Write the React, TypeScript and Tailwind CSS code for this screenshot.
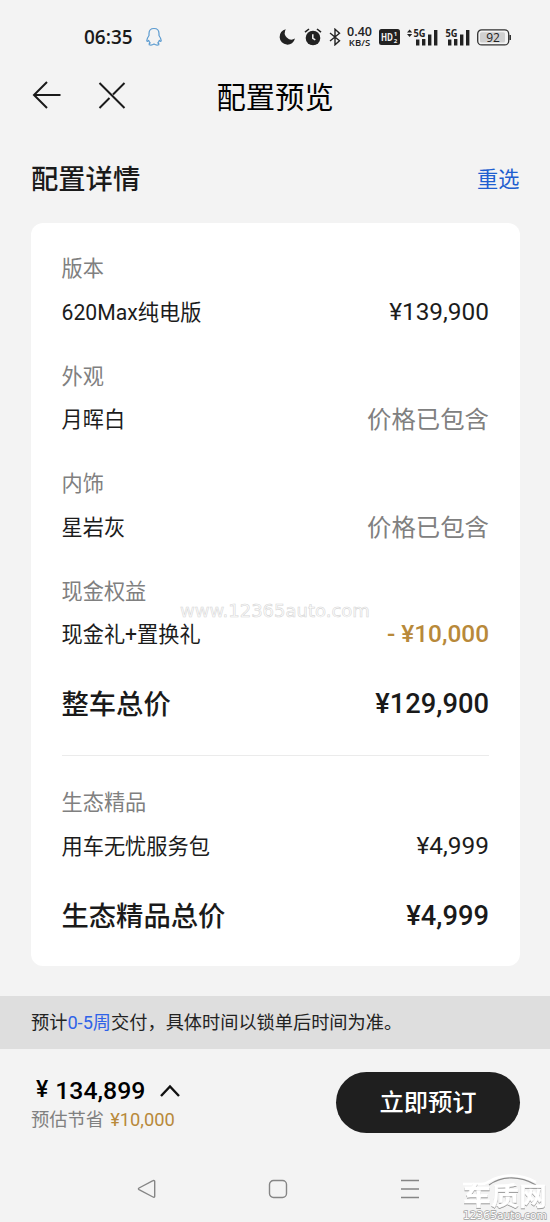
import React from 'react';

interface ConfigItem {
  label: string;
  name: string;
  price: string;
  tone: 'normal' | 'included' | 'discount';
}

const vehicleItems: ConfigItem[] = [
  { label: '版本', name: '620Max纯电版', price: '¥139,900', tone: 'normal' },
  { label: '外观', name: '月晖白', price: '价格已包含', tone: 'included' },
  { label: '内饰', name: '星岩灰', price: '价格已包含', tone: 'included' },
  { label: '现金权益', name: '现金礼+置换礼', price: '- ¥10,000', tone: 'discount' },
];

const ecoItems: ConfigItem[] = [
  { label: '生态精品', name: '用车无忧服务包', price: '¥4,999', tone: 'normal' },
];

const priceTone = {
  normal: 'text-[#1c1c1c]',
  included: 'pt-[2px] text-[#808080]',
  discount: 'font-medium text-[#b8893a]',
};

const SignalBars: React.FC<{ arrows?: boolean }> = ({ arrows }) => (
  <svg width="32" height="20" viewBox="0 0 32 20" fill="#222">
    {arrows && <path d="M0 5.4 2.6 2.4 5.2 5.4zM0 7h5.2L2.6 10z" />}
    <text x="6.5" y="10.3" fontSize="10.5" fontWeight="700" textLength="12" lengthAdjust="spacingAndGlyphs">
      5G
    </text>
    <rect x="9" y="12.5" width="3.4" height="6" />
    <rect x="15" y="12" width="3.4" height="6.5" />
    <rect x="21" y="7.5" width="3.4" height="11" />
    <rect x="27" y="3" width="3.4" height="15.5" />
  </svg>
);

const StatusBar: React.FC = () => (
  <div className="flex h-[74px] items-center pl-[84px] font-['Open_Sans','Noto_Sans',sans-serif]">
    <span className="w-[49px] text-[19px] leading-none font-semibold text-[#1a1a1a]">06:35</span>
    {/* QQ notification */}
    <svg className="ml-[12px]" width="18" height="20" viewBox="0 0 18 20" fill="none" stroke="#5b9bd0" strokeWidth="1.2" strokeLinejoin="round">
      <path d="M9 1.5C5.8 1.5 4 3.8 4 6.5v2C2.8 10.2 1.8 12 1.8 13.6c0 1.2.9 1 1.9-.2.3 1 .8 1.8 1.5 2.5-1 .4-1.3 1-1 1.8 1.8.7 3.5.2 4.8-.6 1.3.8 3 1.3 4.8.6.3-.8 0-1.4-1-1.8.7-.7 1.2-1.5 1.5-2.5 1 1.2 1.9 1.4 1.9.2 0-1.6-1-3.4-2.2-5.1v-2c0-2.7-1.8-5-5-5z" />
    </svg>
    <div className="ml-[116px] flex items-center">
      <svg width="17" height="18" viewBox="0 0 17 18" fill="#222">
        <path d="M6.8 1.2A7.8 7.8 0 1 0 16 10.6 6.8 6.8 0 0 1 6.8 1.2z" />
      </svg>
      <svg className="ml-[8px]" width="18" height="20" viewBox="0 0 18 20">
        <circle cx="9" cy="11" r="7.3" fill="#222" />
        <path d="M1 5.2 5 2M17 5.2 13 2" stroke="#222" strokeWidth="1.6" />
        <path d="M8.8 7.3v4l2.5 1.6" fill="none" stroke="#f3f3f3" strokeWidth="1.5" />
      </svg>
      <svg className="ml-[7px]" width="12" height="18" viewBox="0 0 12 18" fill="none" stroke="#222" strokeWidth="1.4">
        <path d="M1 5 10.5 12.8 6 16.8V1.2l4.5 4L1 13" />
      </svg>
      <div className="ml-[5px] flex w-[27px] flex-col items-center whitespace-nowrap text-[#222]">
        <span className="text-[12.5px] leading-[10px] font-semibold">0.40</span>
        <span className="mt-px text-[9.5px] leading-[10px] font-semibold">KB/S</span>
      </div>
      <svg className="ml-[6px]" width="21" height="16" viewBox="0 0 21 16">
        <rect width="21" height="16" rx="2.5" fill="#222" />
        <text x="2" y="12" fontSize="11" fontWeight="700" fill="#f3f3f3" textLength="12" lengthAdjust="spacingAndGlyphs">HD</text>
        <text x="14.8" y="7.4" fontSize="6" fontWeight="700" fill="#f3f3f3">1</text>
        <text x="14.8" y="13.8" fontSize="6" fontWeight="700" fill="#f3f3f3">2</text>
      </svg>
      <span className="ml-[7px]"><SignalBars arrows /></span>
      <span><SignalBars /></span>
      <svg className="ml-[6px]" width="35" height="17" viewBox="0 0 35 17">
        <rect x="0.7" y="0.9" width="31" height="15" rx="4" fill="none" stroke="#333" strokeWidth="1.3" />
        <rect x="3" y="3.2" width="25" height="10.4" rx="1.5" fill="#d0d0d0" />
        <path d="M33.2 6v5" stroke="#333" strokeWidth="1.6" />
        <text x="9.2" y="12.7" fontSize="12" fontWeight="500" fill="#222">92</text>
      </svg>
    </div>
  </div>
);

const Item: React.FC<{ item: ConfigItem }> = ({ item }) => (
  <div>
    <div className="h-[32px] pt-[1px] text-[21.2px] leading-[32px] text-[#808080]">{item.label}</div>
    <div className="mt-[6px] flex h-[44px] items-center justify-between text-[#1c1c1c]">
      <span className="pt-[1px] text-[21.2px]">{item.name}</span>
      <span className={`text-[24.4px] ${priceTone[item.tone]}`}>{item.price}</span>
    </div>
  </div>
);

const Total: React.FC<{ name: string; price: string }> = ({ name, price }) => (
  <div className="mt-[25.5px] flex h-[44px] items-center justify-between text-[27.3px] font-medium text-[#1a1a1a]">
    <span className="pt-[3px]">{name}</span>
    <span className="pt-px">{price}</span>
  </div>
);

const App: React.FC = () => {
  return (
    <div className="relative h-[1222px] w-[550px] overflow-hidden bg-[#f3f3f3] font-['Roboto','Noto_Sans_CJK_SC',sans-serif] text-[#1a1a1a]">
      <StatusBar />

      {/* Navigation header */}
      <header className="flex h-[44px] items-center">
        <svg className="ml-[32px]" width="30" height="30" viewBox="0 0 30 30" fill="none" stroke="#1a1a1a" strokeWidth="2">
          <path d="M28.5 14H2M15 1 2 14l13 13" />
        </svg>
        <svg className="ml-[36px]" width="28" height="30" viewBox="0 0 28 30" fill="none" stroke="#1a1a1a" strokeWidth="2">
          <path d="M1.5 2 26.5 27M26.5 2 15 13.5M11.5 17 1.5 27" />
        </svg>
        <h1 className="ml-[90.5px] pt-[3px] text-[29.3px] leading-[44px] text-black">配置预览</h1>
      </header>

      <div className="mt-[38px] flex h-[44px] items-center justify-between pt-[4px] pr-[30.5px] pl-[31px]">
        <h2 className="text-[27.3px] font-medium">配置详情</h2>
        <a className="text-[21.2px] text-[#1f5fd0]">重选</a>
      </div>

      {/* Configuration card */}
      <main className="mt-[23px] mr-[30px] ml-[31px] h-[743px] rounded-[12px] bg-white pt-[29px] pr-[31px] pl-[30.5px]">
        <div className="flex flex-col gap-[25.5px]">
          {vehicleItems.map((item) => (
            <Item key={item.label} item={item} />
          ))}
        </div>
        <Total name="整车总价" price="¥129,900" />
        <div className="mt-[29px] mb-[30px] h-px bg-[#ebebeb]" />
        {ecoItems.map((item) => (
          <Item key={item.label} item={item} />
        ))}
        <Total name="生态精品总价" price="¥4,999" />
      </main>

      {/* Delivery notice */}
      <div className="mt-[30px] flex h-[53px] items-center bg-[#dedede] pt-[1px] pl-[31px] text-[18.2px] text-[#222]">
        <p>
          预计<span className="text-[#2f62e8]">0-5周</span>交付，具体时间以锁单后时间为准。
        </p>
      </div>

      {/* Order bar */}
      <footer className="flex h-[106px] items-center justify-between pr-[30px] pl-[31px]">
        <div className="pt-[3px]">
          <div className="flex h-[32px] items-center pl-[5px] text-[24.8px] font-medium text-black">
            <span className="text-[23px]">¥</span>
            <span className="ml-[7px]">134,899</span>
            <svg className="ml-[15px]" width="20" height="13" viewBox="0 0 20 13" fill="none" stroke="#111" strokeWidth="2.4">
              <path d="M1 12 10 2.5 19 12" />
            </svg>
          </div>
          <div className="h-[26px] text-[18.3px] leading-[26px] text-[#808080]">
            预估节省 <span className="ml-[1.5px] text-[#b8893a]">¥10,000</span>
          </div>
        </div>
        <button className="h-[61px] w-[184px] rounded-full bg-[#1f1f1f] pt-[2px] text-[24.3px] font-medium text-white">立即预订</button>
      </footer>

      {/* Android system navigation */}
      <div className="flex h-[67px] items-center pt-[1px] pl-[137px]">
        <svg width="20" height="20" viewBox="0 0 20 20" fill="none" stroke="#858585" strokeWidth="1.4" strokeLinejoin="round">
          <path d="M16 1.7 2 9c-.8.5-.8 1.2 0 1.7L16 18c1 .5 1.7 0 1.7-.8V2.5c0-.9-.8-1.3-1.7-.8z" />
        </svg>
        <svg className="ml-[111px]" width="20" height="20" viewBox="0 0 20 20" fill="none" stroke="#858585" strokeWidth="1.4">
          <rect x="1.5" y="1.5" width="17" height="17" rx="4" />
        </svg>
        <svg className="ml-[112px]" width="20" height="20" viewBox="0 0 20 20" fill="none" stroke="#858585" strokeWidth="1.4">
          <path d="M1 1.5h18M1 10h18M1 18.5h18" />
        </svg>
      </div>

      {/* Watermarks */}
      <div className="absolute top-[600px] left-[180px] font-['DejaVu_Sans',sans-serif] text-[18px] leading-[22px] whitespace-nowrap text-white [-webkit-text-stroke:0.6px_#d6d6d6]">
        www.12365auto.com
      </div>
      <svg className="absolute top-[1172px] left-[460px]" width="90" height="50" viewBox="0 0 90 50">
        <path d="M29 12C42 2.5 60 2.5 76 12" fill="none" stroke="#8c8c8c" strokeWidth="1.2" transform="translate(0 1)" />
        <path d="M3 12h18c3 0 5-.5 8-2.5C42 1.5 60 1.5 76 10" fill="none" stroke="#fff" strokeWidth="2.4" />
        <text x="3" y="33" fontSize="25" fontWeight="700" textLength="84" lengthAdjust="spacingAndGlyphs" fill="#fff" stroke="#fff" strokeWidth="0.5" className="[filter:drop-shadow(0.8px_1px_0px_#999)]">车质网</text>
        <text x="3" y="47" fontSize="10.5" fontFamily="DejaVu Sans" textLength="84" lengthAdjust="spacingAndGlyphs" fill="#fff" stroke="#a0a0a0" strokeWidth="1.4" paintOrder="stroke">12365auto.com</text>
      </svg>
    </div>
  );
};

export default App;
